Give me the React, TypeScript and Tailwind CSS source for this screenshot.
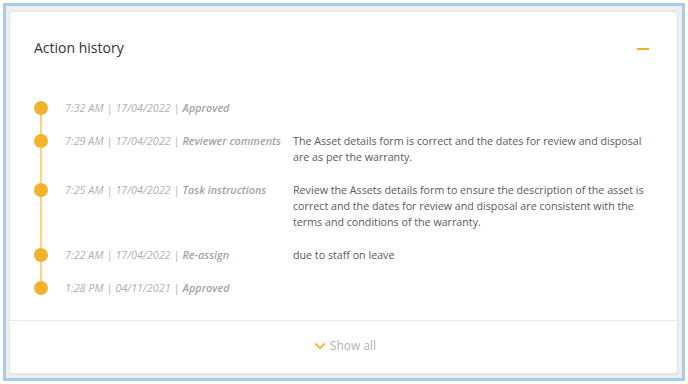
import { ChevronDown } from 'lucide-react';

type Entry = {
  time: string;
  date: string;
  action: string;
  note?: string;
};

const entries: Entry[] = [
  { time: '7:32 AM', date: '17/04/2022', action: 'Approved' },
  {
    time: '7:29 AM',
    date: '17/04/2022',
    action: 'Reviewer comments',
    note: 'The Asset details form is correct and the dates for review and disposal are as per the warranty.',
  },
  {
    time: '7:25 AM',
    date: '17/04/2022',
    action: 'Task instructions',
    note: 'Review the Assets details form to ensure the description of the asset is correct and the dates for review and disposal are consistent with the terms and conditions of the warranty.',
  },
  { time: '7:22 AM', date: '17/04/2022', action: 'Re-assign', note: 'due to staff on leave' },
  { time: '1:28 PM', date: '04/11/2021', action: 'Approved' },
];

function TimelineRow({ entry, last }: { entry: Entry; last: boolean }) {
  return (
    <div className={`flex ${last ? '' : 'pb-[17px]'}`}>
      <div className="flex flex-col items-center w-[14px] shrink-0">
        <div className="w-[14px] h-[14px] rounded-full bg-[#f3b22c] mt-px shrink-0"></div>
        {!last && <div className="flex-1 w-[2px] bg-[#f8d47f] -mb-[18px]"></div>}
      </div>
      <div className="ml-[17px] w-[228px] shrink-0 italic text-[10.8px] leading-[16px] text-[#b0b0b0] whitespace-nowrap">
        {entry.time}
        <span className="mx-[3px]">|</span>
        {entry.date}
        <span className="mx-[3px]">|</span>
        <span className="font-semibold text-[#a3a3a3]">{entry.action}</span>
      </div>
      {entry.note && (
        <p className="w-[356px] text-[10.7px] leading-[16px] text-[#5a5a5a]">{entry.note}</p>
      )}
    </div>
  );
}

export default function App() {
  return (
    <div className="w-[688px] h-[384px] bg-white p-[3px] font-['Open_Sans',sans-serif]">
      <div className="h-full border-[3px] border-[#a9cce6] bg-[#efefef] pt-[5px] pl-[3px] pr-[4px] pb-[4px]">
        <div className="h-full flex flex-col bg-white rounded-[4px] border border-[#e6e6e6] shadow-[0_1px_2px_rgba(0,0,0,0.06)]">
          <div className="flex items-center justify-between pl-[24px] pr-[28px] pt-[26px]">
            <h2 className="text-[14px] leading-[20px] text-[#2c3440]">Action history</h2>
            <div className="w-[12px] h-[2px] bg-[#f4b023] mt-[2px]"></div>
          </div>

          <div className="pl-[24px] pt-[42px] pb-[24px]">
            {entries.map((entry, i) => (
              <TimelineRow key={i} entry={entry} last={i === entries.length - 1} />
            ))}
          </div>

          <div className="flex-1 border-t border-[#ebebeb] flex items-center justify-center pb-[2px]">
            <ChevronDown className="w-[18px] h-[18px] text-[#f2ac1c]" strokeWidth={2.2} />
            <span className="ml-[1px] text-[12px] text-[#b3b3b3]">Show all</span>
          </div>
        </div>
      </div>
    </div>
  );
}
